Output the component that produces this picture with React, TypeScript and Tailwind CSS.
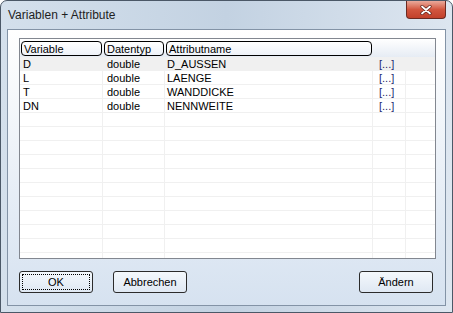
const ROWS = [
  { name: 'D', type: 'double', attr: 'D_AUSSEN' },
  { name: 'L', type: 'double', attr: 'LAENGE' },
  { name: 'T', type: 'double', attr: 'WANDDICKE' },
  { name: 'DN', type: 'double', attr: 'NENNWEITE' },
]

const EMPTY_ROWS = 11

function HeaderCell({ label, width }: { label: string; width: string }) {
  return (
    <div
      className={`${width} h-[15px] shrink-0 rounded-[4px] border border-black bg-gradient-to-b from-white to-[#eef2f8] pl-[2px] leading-[14px]`}
    >
      {label}
    </div>
  )
}

function Row({ name, type, attr, shaded }: { name: string; type: string; attr: string; shaded?: boolean }) {
  return (
    <div className={`flex h-[14px] shrink-0 border-b border-[#f0f0f0] leading-[15px] ${shaded ? 'bg-[#f0f0f0]' : ''}`}>
      <div className="w-[83px] shrink-0 border-r border-[#f0f0f0] pl-[3px]">{name}</div>
      <div className="w-[62px] shrink-0 border-r border-[#f0f0f0] pl-[4px]">{type}</div>
      <div className="w-[208px] shrink-0 border-r border-[#f0f0f0] pl-[2px]">{attr}</div>
      <div className="w-[33px] shrink-0 border-r border-[#f0f0f0] pl-[6px] text-[#1c2a6e]">{name ? '[...]' : ''}</div>
      <div className="flex-1" />
    </div>
  )
}

function DialogButton({ label, focused }: { label: string; focused?: boolean }) {
  return (
    <div className="flex h-[22px] w-[74px] items-center justify-center rounded-[3px] border border-[#2b2b2b] bg-gradient-to-b from-[#f4f8fc] to-[#dfe8f3] p-[2px]">
      <div
        className={`flex h-full w-full items-center justify-center ${focused ? 'border border-dotted border-black' : ''}`}
      >
        {label}
      </div>
    </div>
  )
}

export default function App() {
  return (
    <div
      className="flex h-[313px] w-[453px] flex-col overflow-hidden rounded-t-[7px] border border-[#4b5867] bg-gradient-to-r from-[#d4e0ec] via-[#c3d2e2] to-[#dde6f0] text-[11px] text-black"
      style={{ fontFamily: '"Liberation Sans", Arial, sans-serif' }}
    >
      {/* Title bar */}
      <div className="flex h-[28px] shrink-0 items-start justify-between">
        <div className="pl-[7px] pt-[5px] text-[12px] text-[#1e1e1e]">Variablen + Attribute</div>
        <div className="mr-[6px] flex h-[18px] w-[40px] items-center justify-center rounded-b-[4px] border border-t-0 border-[#6b2a22] bg-gradient-to-b from-[#e9a99b] via-[#d2563f] to-[#c2412b]">
          <svg viewBox="0 0 12 10" className="h-[10px] w-[12px]">
            <path d="M2 1.5L10 8.5M10 1.5L2 8.5" stroke="#5a2018" strokeWidth="3.2" strokeLinecap="round" />
            <path d="M2 1.5L10 8.5M10 1.5L2 8.5" stroke="#ffffff" strokeWidth="1.8" strokeLinecap="round" />
          </svg>
        </div>
      </div>

      {/* Client area */}
      <div className="mx-[6px] mb-[6px] flex flex-1 flex-col border border-[#8393a6] bg-gradient-to-b from-white to-[#d6e2f0] px-[11px] pt-[8px]">
        <div className="flex h-[221px] w-[417px] flex-col overflow-hidden border border-[#828790] bg-white">
          <div className="flex h-[18px] shrink-0 items-center gap-[2px] bg-gradient-to-b from-white to-[#e6ecf4] pl-[1px]">
            <HeaderCell label="Variable" width="w-[81px]" />
            <HeaderCell label="Datentyp" width="w-[60px]" />
            <HeaderCell label="Attributname" width="w-[206px]" />
          </div>
          {ROWS.map((r, i) => (
            <Row key={r.name} {...r} shaded={i === 0} />
          ))}
          {Array.from({ length: EMPTY_ROWS }).map((_, i) => (
            <Row key={`e${i}`} name="" type="" attr="" />
          ))}
        </div>

        <div className="mt-[12px] flex items-center gap-[20px]">
          <DialogButton label="OK" focused />
          <DialogButton label="Abbrechen" />
          <div className="flex-1" />
          <div className="mr-[1px]">
            <DialogButton label="Ändern" />
          </div>
        </div>
      </div>
    </div>
  )
}
